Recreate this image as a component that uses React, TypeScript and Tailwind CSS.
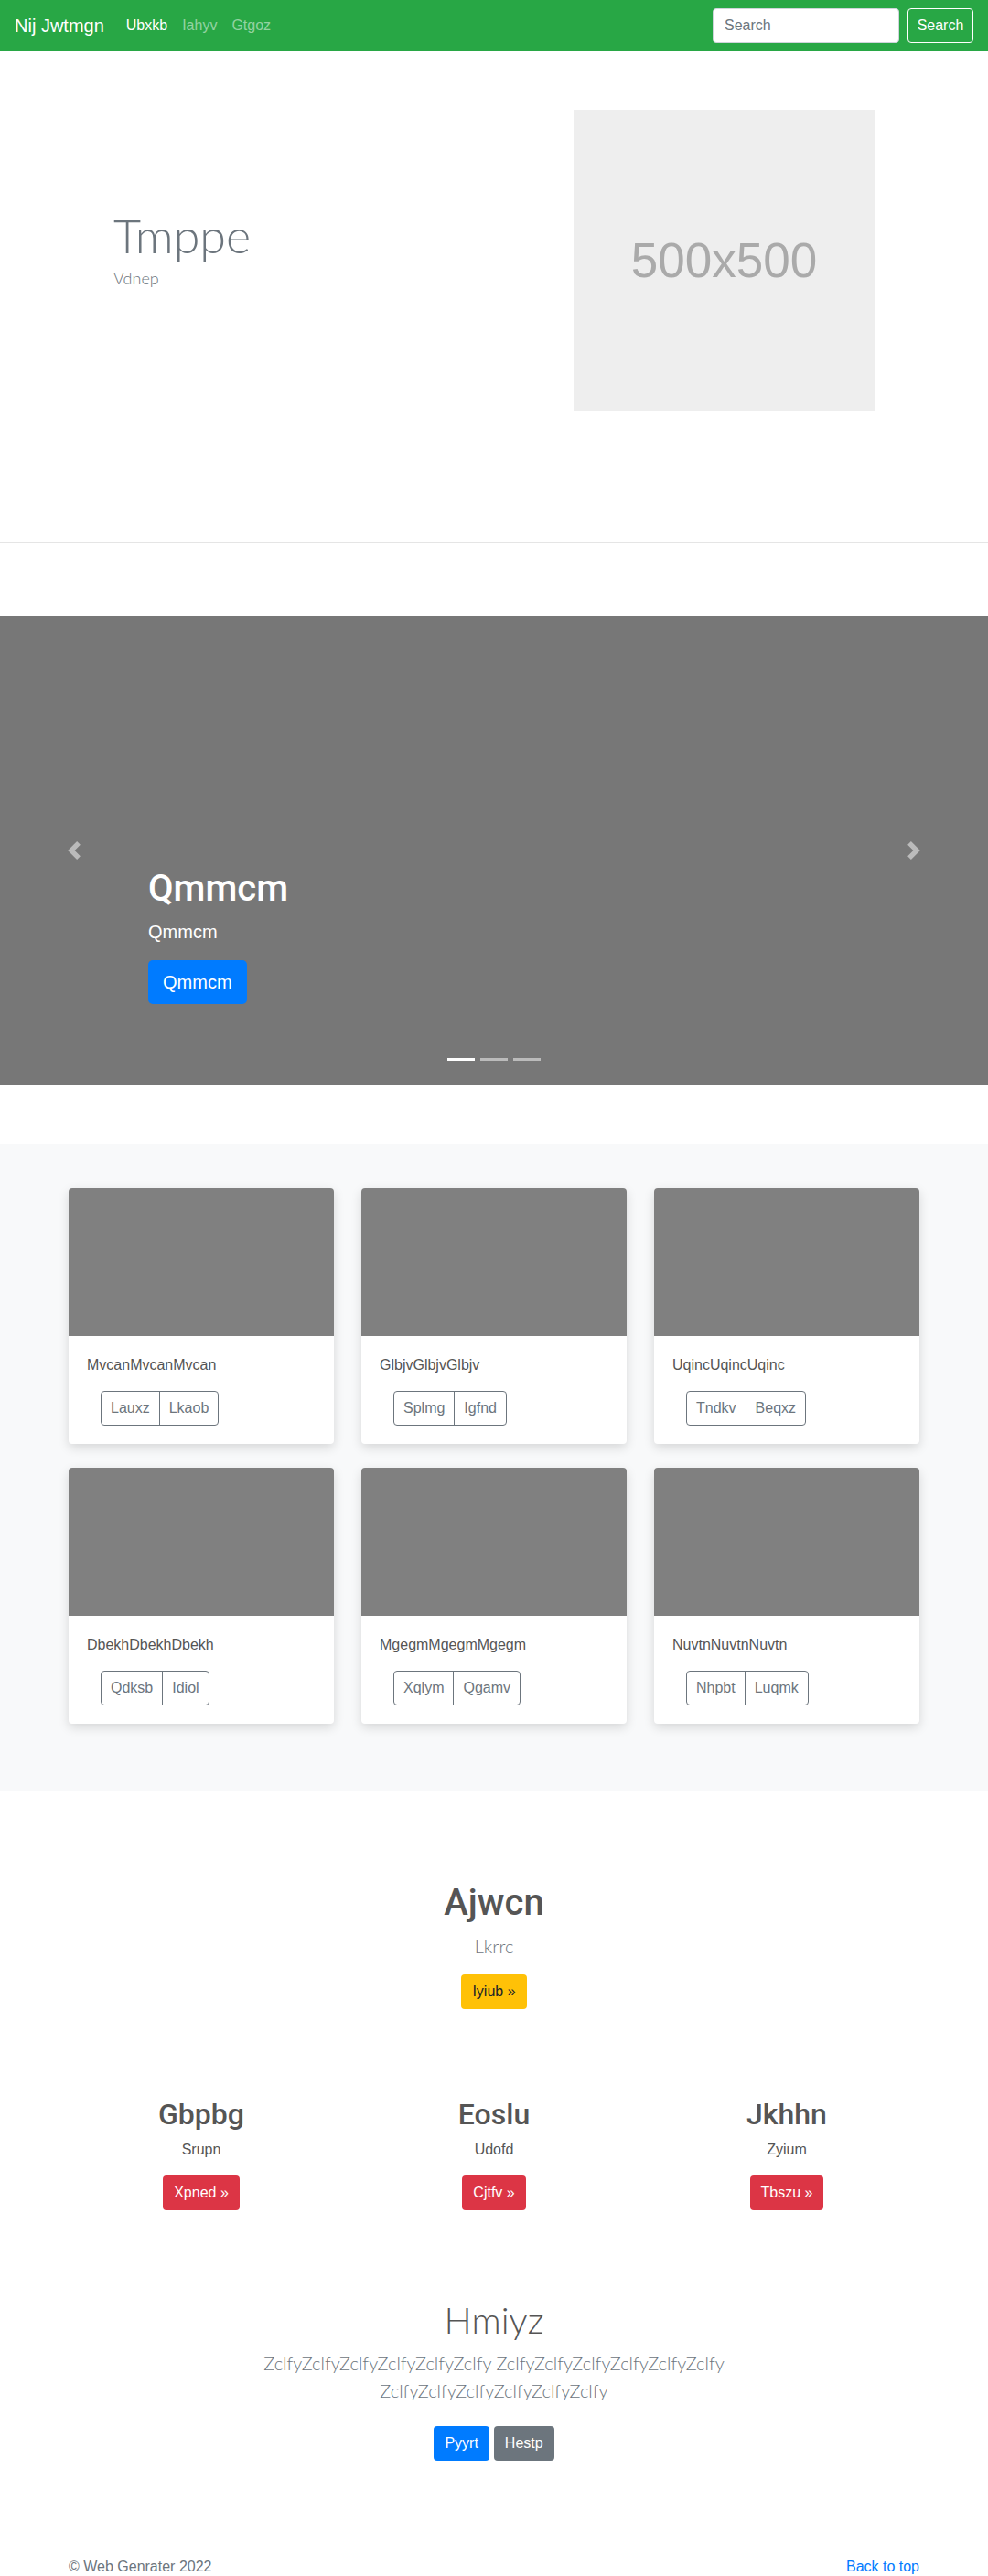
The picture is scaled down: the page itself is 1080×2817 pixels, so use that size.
import React from 'react';

const cards = [
  { text: 'MvcanMvcanMvcan', a: 'Lauxz', b: 'Lkaob' },
  { text: 'GlbjvGlbjvGlbjv', a: 'Splmg', b: 'Igfnd' },
  { text: 'UqincUqincUqinc', a: 'Tndkv', b: 'Beqxz' },
  { text: 'DbekhDbekhDbekh', a: 'Qdksb', b: 'Idiol' },
  { text: 'MgegmMgegmMgegm', a: 'Xqlym', b: 'Qgamv' },
  { text: 'NuvtnNuvtnNuvtn', a: 'Nhpbt', b: 'Luqmk' },
];

const features = [
  { title: 'Gbpbg', text: 'Srupn', btn: 'Xpned »' },
  { title: 'Eoslu', text: 'Udofd', btn: 'Cjtfv »' },
  { title: 'Jkhhn', text: 'Zyium', btn: 'Tbszu »' },
];

const Chevron: React.FC<{ dir: 'left' | 'right' }> = ({ dir }) => (
  <svg viewBox="0 0 8 8" className="w-5 h-5" fill="#fff" fillOpacity={0.5}>
    {dir === 'left' ? (
      <path d="M5.25 0l-4 4 4 4 1.5-1.5L4.25 4l2.5-2.5L5.25 0z" />
    ) : (
      <path d="M2.75 0l-1.5 1.5L3.75 4l-2.5 2.5L2.75 8l4-4-4-4z" />
    )}
  </svg>
);

export default function App() {
  return (
    <div className="font-['Liberation_Sans',Arial,sans-serif] text-[16px] text-[#212529] bg-white">
      {/* navbar */}
      <nav className="h-14 bg-[#28a745] flex items-center px-4">
        <span className="text-[20px] text-white mr-4">Nij Jwtmgn</span>
        <span className="px-2 text-white">Ubxkb</span>
        <span className="px-2 text-white/50">Iahyv</span>
        <span className="px-2 text-white/50">Gtgoz</span>
        <div className="ml-auto flex items-center">
          <input
            placeholder="Search"
            className="w-[204px] h-[38px] mr-[9px] rounded bg-white border border-[#ced4da] px-3 text-[16px] text-[#495057] placeholder:text-[#6c757d] outline-none"
          />
          <button className="w-[72px] h-[38px] rounded border border-white text-white text-[16px]">Search</button>
        </div>
      </nav>

      {/* hero */}
      <section className="flex items-start pt-16 pb-[144px]">
        <div className="w-[627px] pl-[124px] pt-[106px]">
          <h1 className="font-['Lato',sans-serif] font-light text-[52px] leading-[1.2] text-[#6c757d]">Tmppe</h1>
          <p className="font-['Lato',sans-serif] font-light text-[18px] leading-[1.5] mt-[3px] text-[#6c757d]">Vdnep</p>
        </div>
        <div className="w-[329px] h-[329px] bg-[#eeeeee] flex items-center justify-center">
          <span className="text-[53px] text-[#aaaaaa]">500x500</span>
        </div>
      </section>
      <hr className="border-0 border-t border-[#e5e5e5]" />

      {/* carousel */}
      <div className="relative mt-20 h-[512px] bg-[#777777]">
        <div className="absolute left-0 top-0 bottom-0 w-[15%] flex items-center justify-center">
          <Chevron dir="left" />
        </div>
        <div className="absolute right-0 top-0 bottom-0 w-[15%] flex items-center justify-center">
          <Chevron dir="right" />
        </div>
        <div className="absolute left-[162px] top-[274px] text-white">
          <h1 className="font-['Roboto',sans-serif] font-medium text-[40px] leading-[1.2] mb-2">Qmmcm</h1>
          <p className="text-[20px] leading-[1.5] mb-4">Qmmcm</p>
          <button className="h-12 px-4 rounded-[5px] bg-[#007bff] text-white text-[20px]">Qmmcm</button>
        </div>
        <div className="absolute left-0 right-0 top-[483px] flex justify-center gap-[6px]">
          <span className="w-[30px] h-[3px] bg-white" />
          <span className="w-[30px] h-[3px] bg-white/50" />
          <span className="w-[30px] h-[3px] bg-white/50" />
        </div>
      </div>

      {/* album */}
      <section className="mt-[65px] bg-[#f8f9fa] pt-12 pb-[74px]">
        <div className="w-[960px] mx-auto px-[15px] grid grid-cols-3 gap-x-[30px] gap-y-[26px]">
          {cards.map((c) => (
            <div key={c.text} className="bg-white rounded overflow-hidden shadow-[0_4px_12px_rgba(0,0,0,0.14)]">
              <div className="h-[162px] bg-[#808080]" />
              <div className="p-5">
                <p className="text-[16px] leading-[1.5] text-[#555] mb-4">{c.text}</p>
                <div className="ml-[15px] inline-flex h-[38px] rounded border border-[#6c757d] text-[#6c757d] text-[16px]">
                  <span className="px-[10px] flex items-center">{c.a}</span>
                  <span className="px-[10px] flex items-center border-l border-[#6c757d]">{c.b}</span>
                </div>
              </div>
            </div>
          ))}
        </div>
      </section>

      {/* marketing */}
      <section className="pt-[98px] text-center text-[#555]">
        <h1 className="font-['Roboto',sans-serif] font-medium text-[40px] leading-[1.2] mb-2">Ajwcn</h1>
        <p className="font-['Lato',sans-serif] font-light text-[20px] leading-[1.5] text-[#6c757d] mb-4">Lkrrc</p>
        <button className="h-[38px] px-3 rounded bg-[#ffc107] text-[#212529] text-[16px]">Iyiub »</button>

        <div className="w-[960px] mx-auto grid grid-cols-3 mt-24">
          {features.map((f) => (
            <div key={f.title} className="px-[15px]">
              <h2 className="font-['Roboto',sans-serif] font-medium text-[32px] leading-[1.2] mb-2">{f.title}</h2>
              <p className="text-[16px] leading-[1.5] mb-4">{f.text}</p>
              <button className="h-[38px] px-3 rounded bg-[#dc3545] text-white text-[16px]">{f.btn}</button>
            </div>
          ))}
        </div>

        <div className="mt-24">
          <h1 className="font-['Lato',sans-serif] font-light text-[40px] leading-[1.2] mb-2">Hmiyz</h1>
          <p className="font-['Lato',sans-serif] font-light text-[20px] leading-[1.5] text-[#6c757d] max-w-[600px] mx-auto">
            ZclfyZclfyZclfyZclfyZclfyZclfy ZclfyZclfyZclfyZclfyZclfyZclfy ZclfyZclfyZclfyZclfyZclfyZclfy
          </p>
          <div className="flex justify-center gap-[5px] mt-6 mb-2">
            <button className="h-[38px] px-3 rounded bg-[#007bff] text-white text-[16px]">Pyyrt</button>
            <button className="h-[38px] px-3 rounded bg-[#6c757d] text-white text-[16px]">Hestp</button>
          </div>
        </div>
      </section>

      {/* footer */}
      <footer className="w-[960px] mx-auto px-[15px] pt-24 flex justify-between text-[16px] leading-[1.5]">
        <span className="text-[#6c757d]">© Web Genrater 2022</span>
        <span className="text-[#007bff]">Back to top</span>
      </footer>
    </div>
  );
}
